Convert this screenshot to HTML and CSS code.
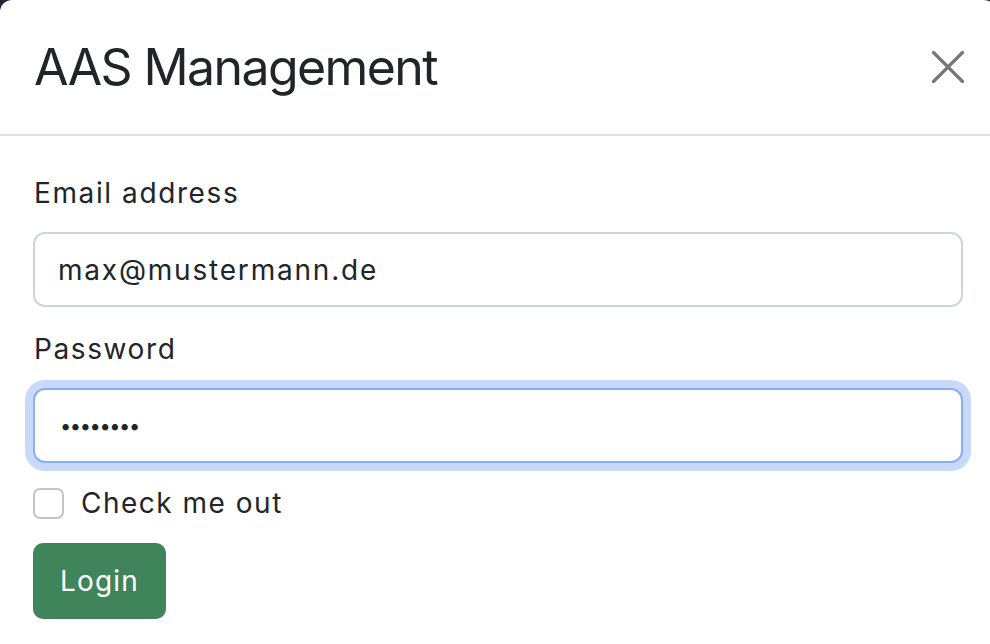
FILE: index.html
```html
<!DOCTYPE html>
<html lang="en">
<head>
<meta charset="utf-8">
<title>AAS Management</title>
<link rel="stylesheet" href="styles.css">
</head>
<body>
<div class="modal">
  <div class="modal-header">
    <h5 class="modal-title">AAS Management</h5>
    <button class="btn-close" type="button" aria-label="Close">
      <svg width="32" height="32" viewBox="0 0 32 32"><path d="M1.5 1.5 L30.5 30.5 M30.5 1.5 L1.5 30.5" stroke="#777" stroke-width="3.2" stroke-linecap="round" fill="none"/></svg>
    </button>
  </div>
  <form class="modal-body">
    <div class="group">
      <label class="form-label" for="email">Email address</label>
      <input class="form-control" id="email" type="email" value="max@mustermann.de">
    </div>
    <div class="group">
      <label class="form-label" for="pw">Password</label>
      <input class="form-control password focused" id="pw" type="password" value="12345678">
    </div>
    <div class="check">
      <span class="check-box"></span>
      <span class="check-label">Check me out</span>
    </div>
    <button class="btn-login" type="button">Login</button>
  </form>
</div>
</body>
</html>
```

FILE: styles.css
```css
html, body {
  margin: 0;
  padding: 0;
}
body {
  background: #1e2833;
  overflow: hidden;
  font-family: "Inter", "Liberation Sans", sans-serif;
  color: #212529;
}
.modal {
  width: 996px;
  height: 660px;
  background: #fff;
  border-radius: 12px;
}
.modal-header {
  box-sizing: border-box;
  height: 136px;
  display: flex;
  align-items: center;
  justify-content: space-between;
  padding: 0 32px 0 34px;
  border-bottom: 2px solid #dee2e6;
}
.modal-title {
  margin: 0;
  font-size: 50px;
  font-weight: 400;
  line-height: 1.2;
  letter-spacing: -1.6px;
}
.btn-close {
  border: 0;
  background: none;
  padding: 0;
  width: 32px;
  height: 32px;
  display: block;
}
.btn-close svg {
  display: block;
}
.modal-body {
  margin: 0;
  padding: 36px 33px;
}
.group {
  margin-bottom: 21px;
}
.group + .group {
  margin-bottom: 25px;
}
.form-label {
  display: block;
  font-size: 28px;
  line-height: 42px;
  margin-bottom: 18px;
  padding-left: 1px;
  letter-spacing: 1.6px;
}
.form-control {
  display: block;
  width: 100%;
  box-sizing: border-box;
  height: 75px;
  border: 2px solid #ced4da;
  border-radius: 12px;
  padding: 0 23px;
  font-family: inherit;
  font-size: 28px;
  letter-spacing: 1.8px;
  color: #212529;
  background: #fff;
  outline: none;
}
.form-control.password {
  font-size: 20px;
  letter-spacing: -1.4px;
  padding-left: 25px;
}
.form-control.focused {
  border-color: #89aef5;
  box-shadow: 0 0 0 8px #c9d9fb;
}
.check {
  display: flex;
  align-items: center;
  height: 31px;
  gap: 17px;
}
.check-box {
  width: 31px;
  height: 31px;
  box-sizing: border-box;
  border: 2px solid #c4c4c4;
  border-radius: 7px;
  background: #fff;
}
.check-label {
  font-size: 28px;
  line-height: 31px;
  letter-spacing: 1.5px;
}
.btn-login {
  margin-top: 24px;
  width: 133px;
  height: 76px;
  border: 0;
  border-radius: 10px;
  background: #3f845a;
  color: #fff;
  font-family: inherit;
  font-size: 28px;
  letter-spacing: 1.2px;
  padding: 0;
}
```
